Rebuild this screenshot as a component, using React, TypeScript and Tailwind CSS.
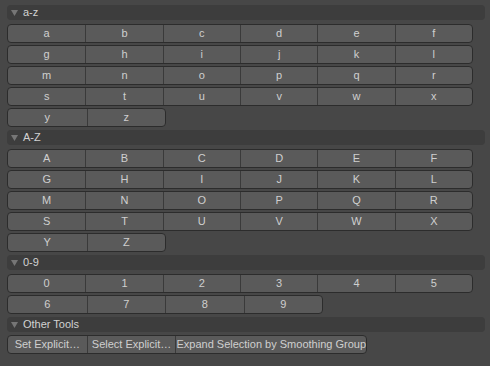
import React from 'react';

const lower = ['a', 'b', 'c', 'd', 'e', 'f', 'g', 'h', 'i', 'j', 'k', 'l', 'm', 'n', 'o', 'p', 'q', 'r', 's', 't', 'u', 'v', 'w', 'x'];
const upper = lower.map((c) => c.toUpperCase());

function Header({ label }: { label: string }) {
  return (
    <div className="h-[15px] rounded-[4px] bg-[#3d3d3d] flex items-center pl-[4px] text-[#d2d2d2]">
      <svg width="7" height="6" viewBox="0 0 7 6" className="mr-[5px] mt-[1px]">
        <path d="M0 0 H7 L3.5 6 Z" fill="#767676" />
      </svg>
      <span className="leading-none">{label}</span>
    </div>
  );
}

function Row({ items, width, cols }: { items: string[]; width: string; cols: string }) {
  return (
    <div className={`grid ${cols} ${width} h-[19px] rounded-[4px] border border-[#2c2c2c] bg-[#5a5a5a] overflow-hidden`}>
      {items.map((c, i) => (
        <div
          key={c}
          className={`flex items-center justify-center text-[#cfcfcf] leading-none ${i > 0 ? 'border-l border-[#3a3a3a]' : ''}`}
        >
          {c}
        </div>
      ))}
    </div>
  );
}

function Grid({ items }: { items: string[] }) {
  const rows: string[][] = [];
  for (let i = 0; i < items.length; i += 6) rows.push(items.slice(i, i + 6));
  return (
    <>
      {rows.map((r, i) => (
        <Row key={i} items={r} width="w-[466px]" cols="grid-cols-6" />
      ))}
    </>
  );
}

export default function App() {
  return (
    <div className="w-[490px] h-[366px] bg-[#474747] pl-[7px] pr-[5px] pt-[5px] font-['Liberation_Sans',Arial,sans-serif] text-[11px] overflow-hidden">
      <Header label="a-z" />
      <div className="flex flex-col gap-[2px] mt-[4px] mb-[3px]">
        <Grid items={lower} />
        <Row items={['y', 'z']} width="w-[159px]" cols="grid-cols-2" />
      </div>

      <Header label="A-Z" />
      <div className="flex flex-col gap-[2px] mt-[4px] mb-[3px]">
        <Grid items={upper} />
        <Row items={['Y', 'Z']} width="w-[159px]" cols="grid-cols-2" />
      </div>

      <Header label="0-9" />
      <div className="flex flex-col gap-[2px] mt-[4px] mb-[3px]">
        <Row items={['0', '1', '2', '3', '4', '5']} width="w-[466px]" cols="grid-cols-6" />
        <Row items={['6', '7', '8', '9']} width="w-[316px]" cols="grid-cols-4" />
      </div>

      <Header label="Other Tools" />
      <div className="mt-[3px] flex w-[360px] h-[19px] rounded-[4px] border border-[#2c2c2c] bg-[#5a5a5a] overflow-hidden text-[#cfcfcf]">
        <div className="w-[79px] flex items-center justify-center leading-none whitespace-nowrap">Set Explicit…</div>
        <div className="w-[89px] flex items-center justify-center leading-none whitespace-nowrap border-l border-[#3a3a3a]">Select Explicit…</div>
        <div className="flex-1 flex items-center justify-center leading-none whitespace-nowrap border-l border-[#3a3a3a]">Expand Selection by Smoothing Group</div>
      </div>
    </div>
  );
}
